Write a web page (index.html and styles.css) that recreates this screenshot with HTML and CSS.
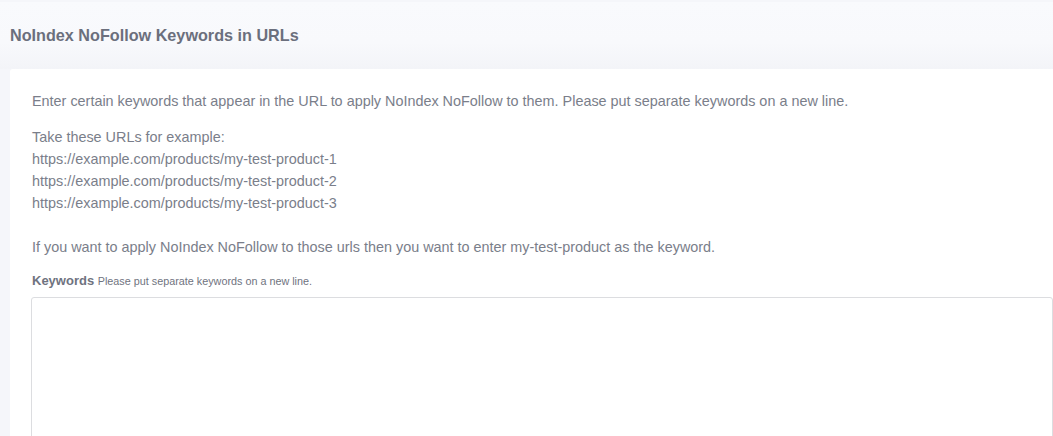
FILE: index.html
```html
<!DOCTYPE html>
<html lang="en">
<head>
    <meta charset="UTF-8">
    <title>NoIndex NoFollow Keywords in URLs</title>
    <link rel="stylesheet" href="styles.css">
</head>
<body>
    <div class="page-header">
        <h2 class="page-title">NoIndex NoFollow Keywords in URLs</h2>
    </div>
    <div class="card">
        <p>Enter certain keywords that appear in the URL to apply NoIndex NoFollow to them. Please put separate keywords on a new line.</p>
        <p class="example">
            Take these URLs for example:<br>
            https://example.com/products/my-test-product-1<br>
            https://example.com/products/my-test-product-2<br>
            https://example.com/products/my-test-product-3<br>
            <br>
            If you want to apply NoIndex NoFollow to those urls then you want to enter my-test-product as the keyword.
        </p>
        <label class="field-label" for="keywords">Keywords <small>Please put separate keywords on a new line.</small></label>
        <textarea id="keywords" class="keywords-input"></textarea>
    </div>
</body>
</html>
```

FILE: styles.css
```css
html, body {
    margin: 0;
    padding: 0;
}
body {
    background: #f5f6fa;
    font-family: Arial, "Liberation Sans", sans-serif;
    color: #7a7e8a;
    overflow: hidden;
}
.page-header {
    margin-top: 2px;
    height: 67px;
    padding: 0 10px;
    box-sizing: border-box;
    background: linear-gradient(180deg, #f9fafd 0%, #f8f9fc 60%, #f3f4f8 100%);
    display: flex;
    align-items: center;
}
.page-title {
    margin: 0;
    font-size: 16.2px;
    font-weight: bold;
    color: #6b6f7d;
}
.card {
    margin-left: 10px;
    background: #fff;
    border-radius: 3px 0 0 0;
    padding: 21px 0 0 22px;
    font-size: 14.4px;
    line-height: 22px;
}
.card p {
    margin: 0 0 14px 0;
}
.card p.example {
    margin-bottom: 13px;
}
.field-label {
    display: block;
    font-weight: bold;
    color: #6f7380;
    font-size: 13px;
    line-height: 20px;
    margin-bottom: 6px;
}
.field-label small {
    font-weight: normal;
    font-size: 10.8px;
}
.keywords-input {
    display: block;
    box-sizing: border-box;
    width: calc(100% + 1px);
    margin-left: -1px;
    height: 200px;
    border: 1px solid #dcdde0;
    border-radius: 3px;
    resize: none;
    font: inherit;
}
```
